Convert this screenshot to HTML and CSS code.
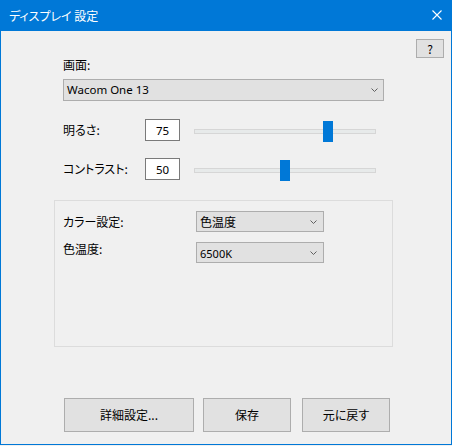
FILE: index.html
```html
<!DOCTYPE html>
<html lang="ja">
<head>
<meta charset="utf-8">
<link rel="stylesheet" href="styles.css">
</head>
<body>
<div class="window">
  <div class="titlebar">
    <span class="title">ディスプレイ 設定</span>
    <svg class="close" width="10" height="10" viewBox="0 0 10 10"><path d="M0.5 0.5 L9.5 9.5 M9.5 0.5 L0.5 9.5" stroke="#fff" stroke-width="1.1" fill="none"/></svg>
  </div>
  <div class="content">
    <div class="help-row"><div class="btn help">?</div></div>
    <div class="main">
      <div class="label">画面:</div>
      <div class="select wide"><span class="latin">Wacom One 13</span><svg class="chev" width="7" height="4" viewBox="0 0 7 4"><path d="M0.5 0.5 L3.5 3.5 L6.5 0.5" stroke="#606060" stroke-width="1" fill="none"/></svg></div>

      <div class="srow first">
        <span class="slabel">明るさ:</span>
        <div class="numbox">75</div>
        <div class="slider"><div class="track"></div><div class="thumb" style="left:129px"></div></div>
      </div>
      <div class="srow second">
        <span class="slabel">コントラスト:</span>
        <div class="numbox">50</div>
        <div class="slider"><div class="track"></div><div class="thumb" style="left:86px"></div></div>
      </div>

      <div class="group">
        <div class="grow r1">
          <span class="glabel">カラー設定:</span>
          <div class="select small"><span>色温度</span><svg class="chev" width="7" height="4" viewBox="0 0 7 4"><path d="M0.5 0.5 L3.5 3.5 L6.5 0.5" stroke="#606060" stroke-width="1" fill="none"/></svg></div>
        </div>
        <div class="grow r2">
          <span class="glabel top">色温度:</span>
          <div class="select small"><span class="latin sm">6500K</span><svg class="chev" width="7" height="4" viewBox="0 0 7 4"><path d="M0.5 0.5 L3.5 3.5 L6.5 0.5" stroke="#606060" stroke-width="1" fill="none"/></svg></div>
        </div>
      </div>

      <div class="buttons">
        <div class="btn b1">詳細設定...</div>
        <div class="btn b2">保存</div>
        <div class="btn b3">元に戻す</div>
      </div>
    </div>
  </div>
</div>
</body>
</html>
```

FILE: styles.css
```css
* { box-sizing: border-box; }
html, body { margin: 0; padding: 0; background: #f0f0f0; }
body {
  font-family: "Noto Sans CJK JP", "Noto Sans", sans-serif;
  font-size: 12px;
  color: #000;
  font-feature-settings: "palt";
}
.window {
  width: 452px;
  height: 445px;
  border: 1px solid #0078d7;
  background: #f0f0f0;
  display: flex;
  flex-direction: column;
}
.titlebar {
  height: 30px;
  background: #0078d7;
  display: flex;
  align-items: center;
  padding-left: 8px;
  color: #fff;
}
.title { flex: 1; font-size: 12px; line-height: 16px; }
.close { margin-right: 9px; margin-bottom: 2px; }
.content { display: flex; flex-direction: column; }
.help-row {
  display: flex;
  justify-content: flex-end;
  padding-right: 7px;
  margin-top: 8px;
}
.btn {
  background: #e1e1e1;
  border: 1px solid #adadad;
  display: flex;
  align-items: center;
  justify-content: center;
  line-height: 14px;
}
.help { width: 28px; height: 19px; font-size: 12px; }
.main { padding-left: 62px; display: flex; flex-direction: column; }
.label { line-height: 14px; height: 14px; }
.select {
  background: #e1e1e1;
  border: 1px solid #adadad;
  display: flex;
  align-items: center;
  justify-content: space-between;
  padding-left: 3px;
  line-height: 14px;
}
.select.wide { width: 321px; height: 22px; margin-top: 7px; padding-right: 5px; }
.select.small { width: 128px; height: 21px; padding-right: 6px; }
.latin { font-family: "Noto Sans", "Noto Sans CJK JP", sans-serif; font-size: 11.5px; }
.latin.sm { font-size: 11px; padding-top: 2px; }
.srow { display: flex; align-items: center; height: 22px; }
.srow.first { margin-top: 18px; }
.srow.second { margin-top: 17px; }
.slabel { width: 82px; line-height: 14px; }
.numbox {
  width: 35px;
  height: 22px;
  background: #fff;
  border: 1px solid #7a7a7a;
  display: flex;
  align-items: center;
  justify-content: center;
  font-family: "Noto Sans", sans-serif;
  font-size: 11.5px;
}
.slider { position: relative; width: 182px; height: 22px; margin-left: 14px; }
.track {
  margin-top: 10px;
  height: 5px;
  background: #e7eaea;
  border: 1px solid #d6d6d6;
}
.thumb {
  position: absolute;
  top: 2px;
  width: 10px;
  height: 21px;
  background: #0078d7;
}
.group {
  margin-top: 20px;
  margin-left: -9px;
  width: 339px;
  height: 147px;
  border: 1px solid #dcdcdc;
  padding: 10px 0 0 8px;
  display: flex;
  flex-direction: column;
  gap: 10px;
}
.grow { display: flex; }
.grow.r1 { align-items: center; }
.grow.r2 { align-items: flex-start; }
.glabel { width: 133px; line-height: 14px; }
.glabel.top { margin-top: 0; }
.buttons { display: flex; margin-top: 51px; margin-left: 1px; }
.buttons .btn { height: 34px; }
.b1 { width: 130px; }
.b2 { width: 88px; margin-left: 9px; }
.b3 { width: 88px; margin-left: 11px; }
```
